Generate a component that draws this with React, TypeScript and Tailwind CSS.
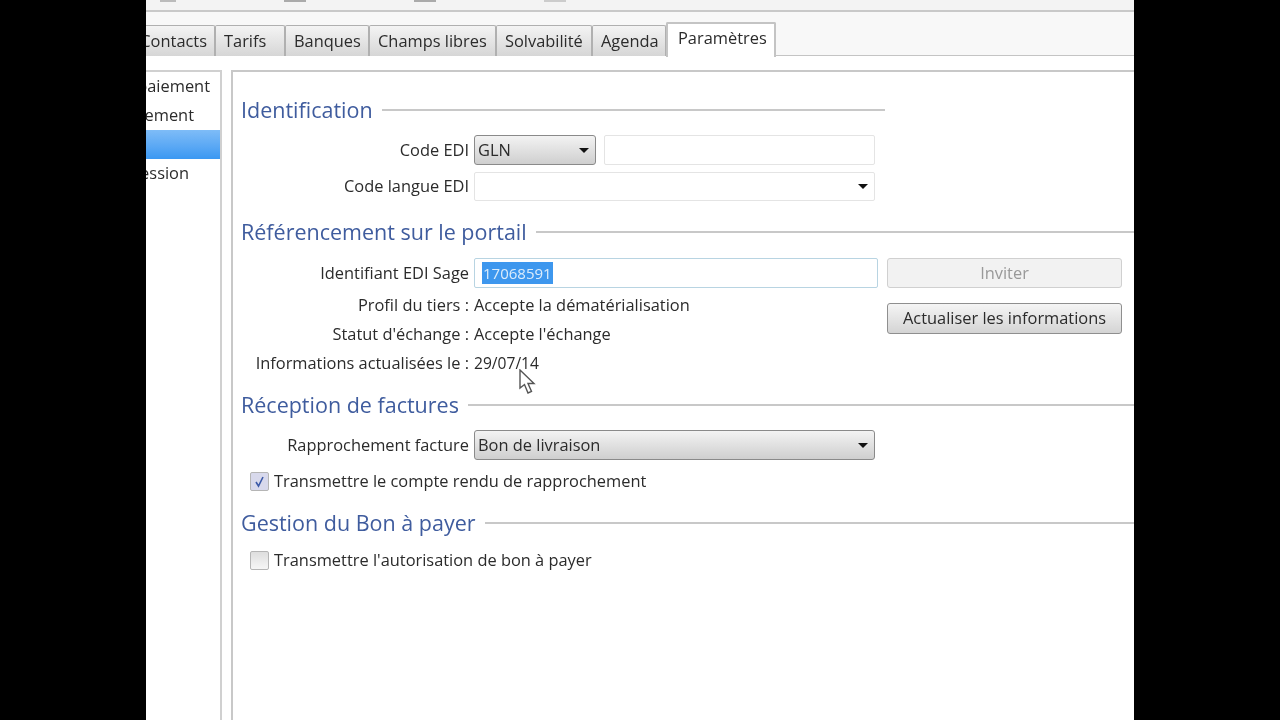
const FONT = "font-['Open_Sans',sans-serif]";

function SectionTitle({ title, lineClass = "" }: { title: string; lineClass?: string }) {
  return (
    <div className="flex h-[30px] items-center">
      <span className="text-[21.5px] leading-none whitespace-nowrap text-[#3f5c9e]">{title}</span>
      <div className={`ml-[9px] h-[2px] bg-[#c8c8c8] ${lineClass || "flex-1"}`} />
    </div>
  );
}

function Caret() {
  return <span className="h-0 w-0 border-x-[5px] border-t-[5px] border-x-transparent border-t-[#111]" />;
}

function Label({ children }: { children: string }) {
  return <div className="w-[228px] shrink-0 text-right whitespace-nowrap">{children}</div>;
}

function Check({ checked, label }: { checked?: boolean; label: string }) {
  return (
    <div className="flex h-[24px] items-center pl-[9px]">
      <div className={`flex h-[19px] w-[19px] items-center justify-center rounded-[2px] border border-[#b5b5b5] ${checked ? "bg-[#d8d9ec]" : "bg-gradient-to-b from-[#dedede] to-[#f6f6f6]"}`}>
        {checked && (
          <svg width="13" height="13" viewBox="0 0 13 13" fill="none" stroke="#3c5aa8" strokeWidth="1.6">
            <path d="M3 7 L5.5 11 L10 2" />
          </svg>
        )}
      </div>
      <span className="ml-[5px] whitespace-nowrap">{label}</span>
    </div>
  );
}

const tabs = [
  { name: "Tarifs", cls: "w-[70px]" },
  { name: "Banques", cls: "w-[84px]" },
  { name: "Champs libres", cls: "w-[127px]" },
  { name: "Solvabilité", cls: "w-[96px]" },
  { name: "Agenda", cls: "w-[74px]" },
];

export default function App() {
  return (
    <div className={`flex h-[720px] w-[1280px] overflow-hidden bg-black text-[16.4px] text-[#2b2b2b] ${FONT}`}>
      <div className="ml-[146px] flex h-full w-[988px] flex-col overflow-hidden bg-white blur-[0.5px]">
        {/* bout de barre d'outils */}
        <div className="flex h-[12px] shrink-0 items-start gap-[108px] border-b-2 border-[#c9c9c9] bg-[#f3f3f3] pl-[14px]">
          <div className="h-[2px] w-[16px] bg-[#bbb]" />
          <div className="h-[2px] w-[22px] bg-[#aaa]" />
          <div className="h-[2px] w-[22px] bg-[#aaa]" />
          <div className="h-[2px] w-[22px] bg-[#ccc]" />
        </div>

        {/* onglets */}
        <div className="flex h-[44px] shrink-0 items-end bg-[#f8f8f8]">
          <div className="flex h-[31px] w-[69px] justify-end overflow-hidden rounded-tr-[2px] border-t border-r border-[#b0b0b0] bg-gradient-to-b from-[#f4f4f4] to-[#d6d6d6] pt-[3px] pr-[7px]">
            <span>Contacts</span>
          </div>
          {tabs.map((t) => (
            <div
              key={t.name}
              className={`h-[31px] rounded-t-[2px] border-x border-t border-[#b0b0b0] bg-gradient-to-b from-[#f4f4f4] to-[#d6d6d6] pt-[3px] pl-[8px] whitespace-nowrap ${t.cls}`}
            >
              {t.name}
            </div>
          ))}
          <div className="relative z-10 -mb-px h-[35px] w-[110px] rounded-t-[2px] border-x-2 border-t-2 border-[#c4c4c4] bg-white pt-[2px] pl-[10px]">
            Paramètres
          </div>
          <div className="h-px flex-1 bg-[#c4c4c4]" />
        </div>

        <div className="flex min-h-0 flex-1 pt-[14px]">
          {/* liste de gauche */}
          <div className="h-full w-[76px] shrink-0 overflow-hidden border-t-2 border-r-2 border-[#d0d0d0]">
            <div className="flex h-[29px] items-center justify-end pr-[10px] whitespace-nowrap">Moyen de paiement</div>
            <div className="flex h-[29px] items-center justify-end pr-[26px] whitespace-nowrap">Règlement</div>
            <div className="h-[29px] bg-gradient-to-b from-[#7ebcf7] to-[#3a98f2]" />
            <div className="flex h-[29px] items-center justify-end pr-[31px] whitespace-nowrap">Impression</div>
          </div>

          {/* panneau */}
          <div className="ml-[9px] min-w-0 flex-1 border-t-2 border-l-2 border-[#c8c8c8] pt-[23px] pl-[8px]">
            <SectionTitle title="Identification" lineClass="w-[503px]" />

            <div className="mt-[10px] flex h-[30px] items-center">
              <Label>Code EDI</Label>
              <div className="ml-[5px] flex h-[30px] w-[122px] items-center justify-between rounded-[3px] border border-[#8a8a8a] bg-gradient-to-b from-[#f3f3f3] to-[#cfcfcf] pr-[6px] pl-[3px]">
                <span>GLN</span>
                <Caret />
              </div>
              <div className="ml-[8px] h-[30px] w-[271px] rounded-[2px] border border-[#e4e4e4]" />
            </div>
            <div className="mt-[7px] flex h-[29px] items-center">
              <Label>Code langue EDI</Label>
              <div className="ml-[5px] flex h-[29px] w-[401px] items-center justify-end rounded-[2px] border border-[#e4e4e4] pr-[6px]">
                <Caret />
              </div>
            </div>

            <div className="mt-[16px]">
              <SectionTitle title="Référencement sur le portail" />
            </div>

            <div className="mt-[11px] flex items-start">
              <div className="w-[646px] shrink-0">
                <div className="flex h-[30px] items-center">
                  <Label>Identifiant EDI Sage</Label>
                  <div className="ml-[5px] flex h-[30px] w-[404px] items-center rounded-[2px] border border-[#b8d4e2] pl-[7px]">
                    <span className="bg-[#3d97ee] px-px text-[15px] text-[#dcecfb]">17068591</span>
                  </div>
                </div>
                <div className="mt-[3px] flex h-[29px] items-center">
                  <Label>Profil du tiers :</Label>
                  <span className="ml-[5px]">Accepte la dématérialisation</span>
                </div>
                <div className="flex h-[29px] items-center">
                  <Label>Statut d'échange :</Label>
                  <span className="ml-[5px]">Accepte l'échange</span>
                </div>
                <div className="flex h-[29px] items-center">
                  <Label>Informations actualisées le :</Label>
                  <span className="ml-[5px] text-[15.6px]">29/07/14</span>
                </div>
              </div>
              <div className="flex w-[235px] shrink-0 flex-col gap-[15px]">
                <div className="flex h-[30px] items-center justify-center rounded-[3px] border border-[#d0d0d0] bg-[#f2f2f2] text-[#999]">
                  Inviter
                </div>
                <div className="flex h-[31px] items-center justify-center rounded-[3px] border border-[#8f8f8f] bg-gradient-to-b from-[#f5f5f5] to-[#d4d4d4] whitespace-nowrap">
                  Actualiser les informations
                </div>
              </div>
            </div>

            <div className="mt-[12px]">
              <SectionTitle title="Réception de factures" />
            </div>

            <div className="mt-[10px] flex h-[30px] items-center">
              <Label>Rapprochement facture</Label>
              <div className="ml-[5px] flex h-[30px] w-[401px] items-center justify-between rounded-[3px] border border-[#8a8a8a] bg-gradient-to-b from-[#f3f3f3] to-[#cfcfcf] pr-[6px] pl-[3px]">
                <span>Bon de livraison</span>
                <Caret />
              </div>
            </div>

            <div className="mt-[9px]">
              <Check checked label="Transmettre le compte rendu de rapprochement" />
            </div>

            <div className="mt-[15px]">
              <SectionTitle title="Gestion du Bon à payer" />
            </div>

            <div className="mt-[10px]">
              <Check label="Transmettre l'autorisation de bon à payer" />
            </div>
          </div>
        </div>
      </div>

      {/* curseur de souris */}
      <svg className="absolute top-[369px] left-[518px]" width="20" height="26" viewBox="0 0 20 26" fill="#fff" stroke="#555" strokeWidth="1.4">
        <path d="M2 1 L2 19 L6.5 15.5 L10 24 L13.5 22.5 L10 14.5 L16 14.5 Z" />
      </svg>
    </div>
  );
}
